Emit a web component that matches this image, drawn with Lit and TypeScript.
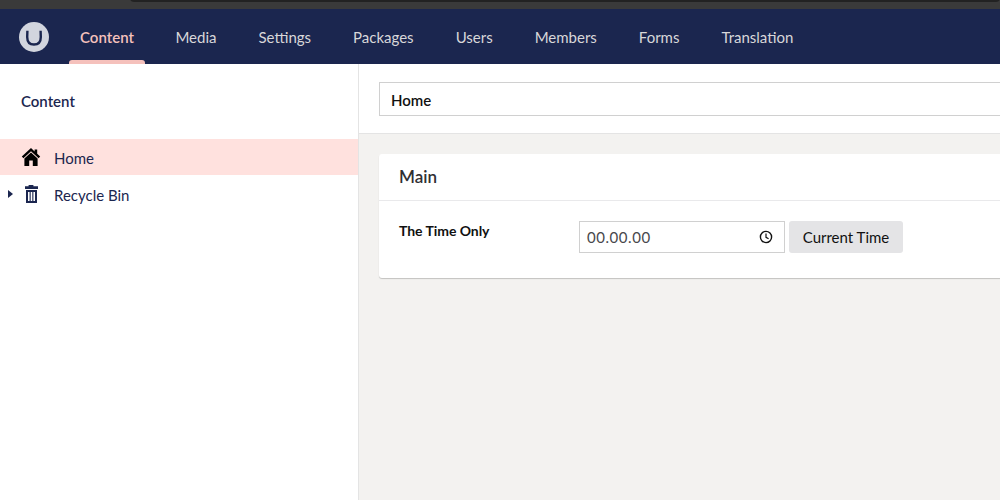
import { LitElement, css, html } from "lit";
import { customElement } from "lit/decorators.js";

const sections = ["Media", "Settings", "Packages", "Users", "Members", "Forms", "Translation"];

@customElement("app-root")
export class AppRoot extends LitElement {
  render() {
    return html`
      <div class="chrome"><div class="chrome__tab"></div></div>
      <header class="topbar">
        <div class="logo">
          <svg width="30" height="30" viewBox="0 0 30 30">
            <circle cx="15" cy="15" r="15" fill="#d2d5de" />
            <path
              d="M8.4 8.7 L8.2 15 C8.2 20.5 10.5 22.5 15 22.5 C19.5 22.5 21.8 20.5 21.8 15 L21.6 8.7"
              fill="none"
              stroke="#1b264f"
              stroke-width="2.4"
            />
          </svg>
        </div>
        <nav class="nav">
          <a class="nav__item nav__item--active">Content</a>
          ${sections.map((s) => html`<a class="nav__item">${s}</a>`)}
        </nav>
      </header>
      <div class="body">
        <aside class="tree">
          <div class="tree__title">Content</div>
          <div class="tree__row tree__row--active">
            <svg class="tree__icon" width="20" height="18" viewBox="0 0 20 18">
              <path d="M10 0 L0.8 8.6 L2.4 10.2 L10 3.2 L17.6 10.2 L19.2 8.6 L16.2 5.8 V1.5 H13.6 V3.5 Z" fill="#000" />
              <path d="M10 4.6 L3.4 10.4 V18 H8.2 V12.6 H11.8 V18 H16.6 V10.4 Z" fill="#000" />
            </svg>
            <span class="tree__label">Home</span>
          </div>
          <div class="tree__row">
            <svg class="tree__caret" width="5" height="8" viewBox="0 0 5 8">
              <path d="M0 0 L5 4 L0 8 Z" fill="#1b264f" />
            </svg>
            <svg class="tree__icon" width="20" height="18" viewBox="0 0 20 18">
              <path d="M7.6 0 H12.4 V1.2 H17 V4 H4 V1.2 H7.6 Z" fill="#1b264f" />
              <path
                fill-rule="evenodd"
                d="M5 5 H16 V18 H5 Z M7 7 V16 H8.6 V7 Z M9.7 7 V16 H11.3 V7 Z M12.4 7 V16 H14 V7 Z"
                fill="#1b264f"
              />
            </svg>
            <span class="tree__label">Recycle Bin</span>
          </div>
        </aside>
        <main class="main">
          <div class="head">
            <div class="head__name">Home</div>
          </div>
          <div class="content">
            <section class="card">
              <div class="card__title">Main</div>
              <div class="prop">
                <div class="prop__label">The Time Only</div>
                <div class="time">
                  <span>00.00.00</span>
                  <svg width="14" height="14" viewBox="0 0 14 14">
                    <circle cx="7" cy="7" r="5.6" fill="none" stroke="#111" stroke-width="1.4" />
                    <path d="M7 3.6 V7.3 L9.6 8.8" fill="none" stroke="#111" stroke-width="1.2" />
                  </svg>
                </div>
                <button class="btn">Current Time</button>
              </div>
            </section>
          </div>
        </main>
      </div>
    `;
  }

  static styles = css`
    :host {
      display: block;
      width: 1000px;
      height: 500px;
      overflow: hidden;
      font-family: Lato, sans-serif;
      color: #1b264f;
    }

    .chrome {
      height: 9px;
      background: #3a3a3a;
      position: relative;
      overflow: hidden;
    }

    .chrome__tab {
      position: absolute;
      left: 130px;
      top: -8px;
      width: 870px;
      height: 10px;
      background: #222;
      border-radius: 4px;
    }

    .topbar {
      height: 55px;
      background: #1b264f;
      display: flex;
    }

    .logo {
      width: 69px;
      padding: 13px 0 0 19px;
      box-sizing: border-box;
    }

    .nav {
      display: flex;
    }

    .nav__item {
      padding: 0 21px;
      font-size: 15px;
      line-height: 56px;
      color: #d8d7d9;
      position: relative;
    }

    .nav__item--active {
      color: #f5c1bc;
      font-weight: 600;
      padding: 0 11px;
      width: 54px;
      text-align: center;
      margin-right: 9.4px;
    }

    .nav__item--active::after {
      content: "";
      position: absolute;
      left: 0;
      right: 0;
      bottom: 0;
      height: 4px;
      background: #f5c1bc;
      border-radius: 3px 3px 0 0;
    }

    .body {
      display: flex;
      height: 436px;
    }

    .tree {
      width: 359px;
      flex: none;
      box-sizing: border-box;
      background: #fff;
      border-right: 1px solid #e4e4e4;
    }

    .tree__title {
      height: 75px;
      padding: 28px 0 0 21px;
      box-sizing: border-box;
      font-size: 15px;
      font-weight: 600;
      line-height: 18px;
    }

    .tree__row {
      height: 36px;
      margin-bottom: 1px;
      display: flex;
      align-items: center;
      position: relative;
      padding-left: 21px;
      font-size: 15px;
    }

    .tree__row--active {
      background: #ffe1de;
    }

    .tree__icon {
      margin-right: 13px;
      flex: none;
    }

    .tree__label {
      padding-top: 2px;
    }

    .tree__caret {
      position: absolute;
      left: 8px;
      top: 14px;
    }

    .main {
      flex: 1;
      min-width: 0;
      background: #f3f2f0;
    }

    .head {
      height: 70px;
      box-sizing: border-box;
      background: #fff;
      border-bottom: 1px solid #e4e4e4;
      padding: 18px 0 0 20px;
    }

    .head__name {
      width: 700px;
      height: 34px;
      box-sizing: border-box;
      border: 1px solid #d0d0d0;
      padding-left: 11px;
      font-size: 15px;
      font-weight: 600;
      line-height: 34px;
      color: #111;
    }

    .content {
      padding: 20px 0 0 20px;
    }

    .card {
      width: 700px;
      height: 124px;
      background: #fff;
      border-radius: 3px;
      box-shadow: 0 1px 1px rgba(0, 0, 0, 0.2);
    }

    .card__title {
      height: 47px;
      box-sizing: border-box;
      border-bottom: 1px solid #e9e9eb;
      padding-left: 20px;
      font-size: 17px;
      font-weight: 600;
      line-height: 46px;
      color: #303033;
    }

    .prop {
      display: flex;
      align-items: flex-start;
      padding: 20px 0 0 20px;
    }

    .prop__label {
      width: 180px;
      font-size: 14px;
      font-weight: 700;
      letter-spacing: -0.05px;
      line-height: 20px;
      color: #111;
    }

    .time {
      width: 206px;
      height: 32px;
      box-sizing: border-box;
      border: 1px solid #d0d0d0;
      display: flex;
      align-items: center;
      justify-content: space-between;
      padding: 0 11px 0 7px;
      font-size: 15px;
      letter-spacing: 0.55px;
      color: #48484c;
    }

    .btn {
      margin-left: 4px;
      width: 114px;
      height: 32px;
      border: none;
      border-radius: 3px;
      background: #e4e4e6;
      font: 15px Lato, sans-serif;
      color: #111;
      padding: 0;
    }
  `;
}
